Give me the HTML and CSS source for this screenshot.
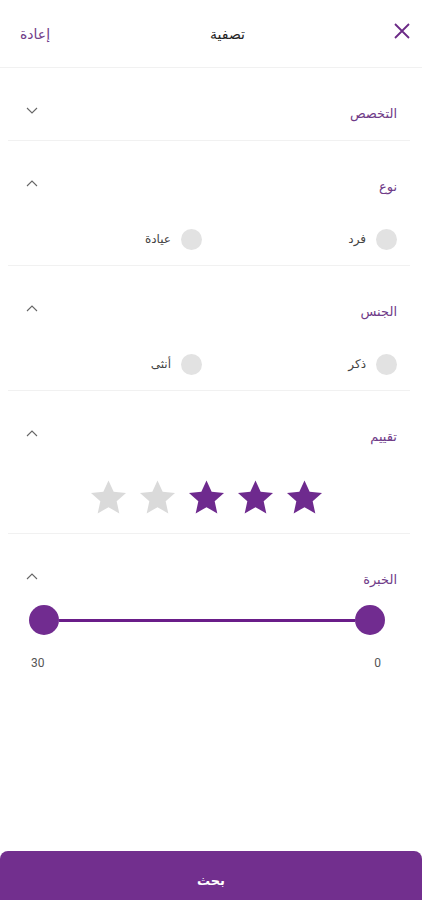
FILE: index.html
```html
<!DOCTYPE html>
<html lang="ar" dir="rtl">
<head>
    <meta charset="UTF-8">
    <meta name="viewport" content="width=device-width, initial-scale=1.0">
    <title>تصفية</title>
    <link rel="stylesheet" href="styles.css">
</head>
<body>
    <div class="page">
        <!-- Top bar -->
        <header class="top-bar">
            <button class="close-btn" aria-label="إغلاق">
                <svg width="18" height="18" viewBox="0 0 18 18">
                    <path d="M2 2 L16 16 M16 2 L2 16" stroke="#6b2a86" stroke-width="1.8" fill="none"/>
                </svg>
            </button>
            <h1 class="title">تصفية</h1>
            <a class="reset" href="#">إعادة</a>
        </header>

        <main class="filters">
            <!-- Specialty -->
            <section class="filter">
                <div class="filter-head">
                    <span class="filter-label">التخصص</span>
                    <svg class="chevron" width="12" height="7" viewBox="0 0 12 7">
                        <path d="M1 1 L6 6 L11 1" stroke="#666" stroke-width="1.1" fill="none"/>
                    </svg>
                </div>
            </section>

            <!-- Type -->
            <section class="filter">
                <div class="filter-head">
                    <span class="filter-label">نوع</span>
                    <svg class="chevron" width="12" height="7" viewBox="0 0 12 7">
                        <path d="M1 6 L6 1 L11 6" stroke="#666" stroke-width="1.1" fill="none"/>
                    </svg>
                </div>
                <div class="radio-row">
                    <label class="radio"><span class="dot"></span>فرد</label>
                    <label class="radio"><span class="dot"></span>عيادة</label>
                </div>
            </section>

            <!-- Gender -->
            <section class="filter">
                <div class="filter-head">
                    <span class="filter-label">الجنس</span>
                    <svg class="chevron" width="12" height="7" viewBox="0 0 12 7">
                        <path d="M1 6 L6 1 L11 6" stroke="#666" stroke-width="1.1" fill="none"/>
                    </svg>
                </div>
                <div class="radio-row">
                    <label class="radio"><span class="dot"></span>ذكر</label>
                    <label class="radio"><span class="dot"></span>أنثى</label>
                </div>
            </section>

            <!-- Rating -->
            <section class="filter">
                <div class="filter-head">
                    <span class="filter-label">تقييم</span>
                    <svg class="chevron" width="12" height="7" viewBox="0 0 12 7">
                        <path d="M1 6 L6 1 L11 6" stroke="#666" stroke-width="1.1" fill="none"/>
                    </svg>
                </div>
                <div class="stars">
                    <svg class="star on" viewBox="0 0 24 24"><path d="M12 1.5 L15.1 8.3 L22.5 9 L16.9 14 L18.5 21.3 L12 17.5 L5.5 21.3 L7.1 14 L1.5 9 L8.9 8.3 Z"/></svg>
                    <svg class="star on" viewBox="0 0 24 24"><path d="M12 1.5 L15.1 8.3 L22.5 9 L16.9 14 L18.5 21.3 L12 17.5 L5.5 21.3 L7.1 14 L1.5 9 L8.9 8.3 Z"/></svg>
                    <svg class="star on" viewBox="0 0 24 24"><path d="M12 1.5 L15.1 8.3 L22.5 9 L16.9 14 L18.5 21.3 L12 17.5 L5.5 21.3 L7.1 14 L1.5 9 L8.9 8.3 Z"/></svg>
                    <svg class="star" viewBox="0 0 24 24"><path d="M12 1.5 L15.1 8.3 L22.5 9 L16.9 14 L18.5 21.3 L12 17.5 L5.5 21.3 L7.1 14 L1.5 9 L8.9 8.3 Z"/></svg>
                    <svg class="star" viewBox="0 0 24 24"><path d="M12 1.5 L15.1 8.3 L22.5 9 L16.9 14 L18.5 21.3 L12 17.5 L5.5 21.3 L7.1 14 L1.5 9 L8.9 8.3 Z"/></svg>
                </div>
            </section>

            <!-- Experience -->
            <section class="filter last">
                <div class="filter-head">
                    <span class="filter-label">الخبرة</span>
                    <svg class="chevron" width="12" height="7" viewBox="0 0 12 7">
                        <path d="M1 6 L6 1 L11 6" stroke="#666" stroke-width="1.1" fill="none"/>
                    </svg>
                </div>
                <div class="range">
                    <span class="thumb"></span>
                    <span class="track"></span>
                    <span class="thumb"></span>
                </div>
                <div class="range-values">
                    <span>0</span>
                    <span>30</span>
                </div>
            </section>
        </main>

        <button class="search-btn">بحث</button>
    </div>
</body>
</html>
```

FILE: styles.css
```css
/* General Page Styling */
body {
    margin: 0;
    padding: 0;
    background: #fff;
    font-family: "DejaVu Sans", "Noto Sans", sans-serif;
    color: #333;
    overflow: hidden;
}

.page {
    height: 909px;
    display: flex;
    flex-direction: column;
}

/* Top Bar */
.top-bar {
    height: 68px;
    box-sizing: border-box;
    display: flex;
    align-items: center;
    justify-content: space-between;
    padding: 0 11px 0 20px;
    border-bottom: 1px solid #f1f1f1;
}

.close-btn {
    background: none;
    border: none;
    padding: 0;
    width: 18px;
    height: 18px;
    margin-top: -6px;
    cursor: pointer;
}

.title {
    margin: 0;
    font-size: 14px;
    font-weight: normal;
    color: #222;
    padding-left: 12px;
}

.reset {
    font-size: 14px;
    color: #6f3b88;
    text-decoration: none;
}

/* Filter Sections */
.filters {
    flex: 1;
}

.filter {
    margin: 0 12px 0 8px;
    padding: 33px 13px 15px 18px;
    border-bottom: 1px solid #f1f1f1;
}

.filter.last {
    border-bottom: none;
}

.filter-head {
    height: 24px;
    display: flex;
    align-items: center;
    justify-content: space-between;
}

.filter-label {
    font-size: 13px;
    color: #6f3b88;
}

.chevron {
    margin-top: -5px;
}

/* Radio options */
.radio-row {
    display: flex;
    margin-top: 30px;
}

.radio {
    width: 195px;
    flex-shrink: 0;
    display: flex;
    align-items: center;
    gap: 10px;
    font-size: 12px;
    color: #444;
    height: 22px;
}

.dot {
    width: 21px;
    height: 21px;
    border-radius: 50%;
    background: #e2e2e2;
}

/* Stars */
.stars {
    display: flex;
    justify-content: center;
    gap: 8px;
    margin-top: 30px;
    padding-right: 10px;
}

.star {
    width: 41px;
    height: 40px;
    fill: #dadada;
}

.star.on {
    fill: #6e2a8e;
}

/* Range slider */
.range {
    display: flex;
    align-items: center;
    margin: 14px 12px 0 3px;
}

.thumb {
    width: 30px;
    height: 30px;
    border-radius: 50%;
    background: #712c90;
}

.track {
    flex: 1;
    height: 3px;
    background: #6a1d89;
}

.range-values {
    display: flex;
    justify-content: space-between;
    margin: 21px 16px 0 5px;
    font-family: Roboto, sans-serif;
    font-size: 12px;
    color: #555;
}

/* Search button */
.search-btn {
    height: 58px;
    border: none;
    border-radius: 8px;
    background: #722f8e;
    color: #fff;
    font-family: "DejaVu Sans", sans-serif;
    font-size: 13px;
    font-weight: bold;
    cursor: pointer;
}
```
